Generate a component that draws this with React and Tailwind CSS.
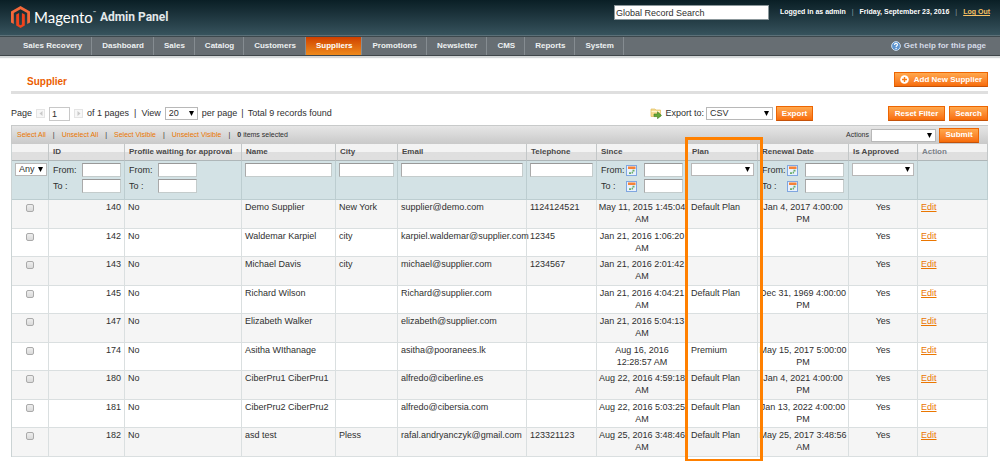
import { useState } from "react";
import { clsx } from "clsx";

const NAV = [
  "Sales Recovery",
  "Dashboard",
  "Sales",
  "Catalog",
  "Customers",
  "Suppliers",
  "Promotions",
  "Newsletter",
  "CMS",
  "Reports",
  "System",
];

// label + column width
const COLUMNS = [
  { label: "", width: "w-[37px]" },
  { label: "ID", width: "w-[76px]" },
  { label: "Profile waiting for approval", width: "w-[117px]" },
  { label: "Name", width: "w-[94px]" },
  { label: "City", width: "w-[62px]" },
  { label: "Email", width: "w-[129px]" },
  { label: "Telephone", width: "w-[70px]" },
  { label: "Since", width: "w-[91px]" },
  { label: "Plan", width: "w-[70px]" },
  { label: "Renewal Date", width: "w-[91px]" },
  { label: "Is Approved", width: "w-[69px]" },
  { label: "Action", width: "w-[70px]" },
];

const SUPPLIERS = [
  { id: 140, name: "Demo Supplier", city: "New York", email: "supplier@demo.com", phone: "1124124521", since: ["May 11, 2015 1:45:04", "AM"], plan: "Default Plan", renewal: ["Jan 4, 2017 4:00:00", "PM"] },
  { id: 142, name: "Waldemar Karpiel", city: "city", email: "karpiel.waldemar@supplier.com", phone: "12345", since: ["Jan 21, 2016 1:06:20", "AM"], plan: "", renewal: [] },
  { id: 143, name: "Michael Davis", city: "city", email: "michael@supplier.com", phone: "1234567", since: ["Jan 21, 2016 2:01:42", "AM"], plan: "", renewal: [] },
  { id: 145, name: "Richard Wilson", city: "", email: "Richard@supplier.com", phone: "", since: ["Jan 21, 2016 4:04:21", "AM"], plan: "Default Plan", renewal: ["Dec 31, 1969 4:00:00", "PM"] },
  { id: 147, name: "Elizabeth Walker", city: "", email: "elizabeth@supplier.com", phone: "", since: ["Jan 21, 2016 5:04:13", "AM"], plan: "", renewal: [] },
  { id: 174, name: "Asitha WIthanage", city: "", email: "asitha@pooranees.lk", phone: "", since: ["Aug 16, 2016", "12:28:57 AM"], plan: "Premium", renewal: ["May 15, 2017 5:00:00", "PM"] },
  { id: 180, name: "CiberPru1 CiberPru1", city: "", email: "alfredo@ciberline.es", phone: "", since: ["Aug 22, 2016 4:59:18", "AM"], plan: "Default Plan", renewal: ["Jan 4, 2021 4:00:00", "PM"] },
  { id: 181, name: "CiberPru2 CiberPru2", city: "", email: "alfredo@cibersia.com", phone: "", since: ["Aug 22, 2016 5:03:25", "AM"], plan: "Default Plan", renewal: ["Jan 13, 2022 4:00:00", "PM"] },
  { id: 182, name: "asd test", city: "Pless", email: "rafal.andryanczyk@gmail.com", phone: "123321123", since: ["Aug 25, 2016 3:48:46", "AM"], plan: "Default Plan", renewal: ["May 25, 2017 3:48:56", "AM"] },
];

function MagentoMark() {
  return (
    <svg viewBox="0 0 19 22" className="h-[22px] w-[19px]" aria-hidden="true">
      <path d="M9.5 0 19 5.500v11l-2.800 1.600V7.100L9.500 3.200 2.800 7.100v11L0 16.500v-11z" fill="#f4683a" />
      <path d="M8.100 7v11.500l1.400.8 1.400-.8V7l2.900 1.500v10.900L9.500 22l-4.300-2.600V8.500z" fill="#f0431c" />
    </svg>
  );
}

function HelpIcon() {
  return (
    <svg viewBox="0 0 10 10" className="size-[10px]" aria-hidden="true">
      <circle cx="5" cy="5" r="4.4" fill="#5d94cf" stroke="#d5e4f3" strokeWidth="0.9" />
      <path d="M3.5 3.9c0-2 3-2 3-.1 0 1-1.4 1-1.4 2.2" fill="none" stroke="#fff" strokeWidth="1.1" />
      <circle cx="5.1" cy="7.4" r="0.7" fill="#fff" />
    </svg>
  );
}

function PlusIcon() {
  return (
    <svg viewBox="0 0 9 9" className="size-[9px]" aria-hidden="true">
      <circle cx="4.5" cy="4.5" r="4.3" fill="#fff" />
      <path d="M4.5 2v5M2 4.5h5" stroke="#f77a12" strokeWidth="1.4" />
    </svg>
  );
}

function ExportIcon() {
  return (
    <svg viewBox="0 0 12 11" className="h-[11px] w-3" aria-hidden="true">
      <path d="M1 1h4l1 1h4.500v6.500H1z" fill="#f6dc8e" stroke="#dfbd62" strokeWidth="0.7" />
      <path d="M1.500 3.500h8.500" stroke="#fff5cf" strokeWidth="1.2" />
      <path d="M4 6h3.500V3.800L11.500 7.400 7.500 10.700V8.600H4z" fill="#63a83a" stroke="#3f7d22" strokeWidth="0.6" />
    </svg>
  );
}

function CalendarIcon() {
  return (
    <svg viewBox="0 0 11 11" className="size-[11px]" aria-hidden="true">
      <rect x="0.5" y="0.5" width="10" height="10" fill="#e9f1fc" stroke="#7fa6e0" />
      <rect x="2" y="1.500" width="7.500" height="2.500" fill="#f58238" />
      <path d="M6.500 4.800h2v1.800h-2zM3 7.200h2v1.800H3zM5.600 6.800h1.500v1.800H5.600z" fill="#6cae6a" />
    </svg>
  );
}

function PagerArrow({ direction }) {
  return (
    <button
      type="button"
      aria-label={direction === "prev" ? "Previous page" : "Next page"}
      className="flex size-[9px] items-center justify-center border border-[#e4e4e4] bg-[#f7f7f7]"
    >
      <svg viewBox="0 0 4 5" className="h-[5px] w-1" aria-hidden="true">
        <path d={direction === "prev" ? "M3.500 0v5L0.500 2.500z" : "M0.500 0v5L3.500 2.500z"} fill="#c9c9c9" />
      </svg>
    </button>
  );
}

function OrangeButton({ children, className }) {
  return (
    <button
      type="button"
      className={clsx(
        "flex h-[15px] items-center justify-center gap-[5px] border border-[#ed6502] border-b-[#c4520a] bg-linear-to-b from-[#ffa84c] to-[#f76c05] text-[8px] font-bold whitespace-nowrap text-white",
        className
      )}
    >
      {children}
    </button>
  );
}

function Select({ label, options = [""], className }) {
  return (
    <span className={clsx("relative flex", className)}>
      <select
        aria-label={label}
        className="h-[13px] w-full appearance-none border border-[#b8b8b8] bg-white pl-[3px] text-[9px] leading-[11px] text-[#2f2f2f]"
      >
        {options.map((o) => (
          <option key={o}>{o}</option>
        ))}
      </select>
      <svg viewBox="0 0 5 5" className="pointer-events-none absolute top-1 right-1 size-[5px]" aria-hidden="true">
        <path d="M0 0h5L2.500 5z" fill="#000" />
      </svg>
    </span>
  );
}

function TextFilter({ label, className }) {
  return (
    <input
      type="text"
      aria-label={label}
      className={clsx("block h-[14px] border border-[#c4cccc] border-t-[#999] border-l-[#aaa] bg-white px-1 text-[9px]", className)}
    />
  );
}

function RangeFilter({ name, calendar }) {
  return (
    <div className="flex flex-col gap-[2px]">
      {["From:", "To :"].map((label) => (
        <label key={label} className="flex h-[14px] items-center pl-px text-[9px] text-[#2f2f2f]">
          <span className={calendar ? "w-[25px]" : "w-[29px]"}>{label}</span>
          {calendar && (
            <button type="button" aria-label={`${name} calendar`} className="mr-[7px]">
              <CalendarIcon />
            </button>
          )}
          <TextFilter label={`${name} ${label}`} className="w-[39px]" />
        </label>
      ))}
    </div>
  );
}

function Header() {
  return (
    <header className="flex h-9 items-start justify-between border-b border-[#5b7078] bg-linear-to-b from-[#0a1f26] to-[#37535d] pr-[10px] pl-[11px]">
      <div className="flex items-center gap-1 pt-[6px] whitespace-nowrap text-white">
        <MagentoMark />
        <span className="flex items-start font-['Lato',sans-serif] text-[15px] leading-[20px]">
          Magento<span className="pt-[2px] text-[4px] leading-[8px]">™</span>
        </span>
        <span className="font-['Roboto',sans-serif] text-[12px] leading-[20px] font-bold text-[#e3e8ea]">Admin Panel</span>
      </div>
      <div className="flex items-center gap-[11px] pt-[5px] text-[7px] font-bold whitespace-nowrap text-white">
        <input
          type="text"
          aria-label="Global Record Search"
          defaultValue="Global Record Search"
          className="h-[15px] w-[155px] border border-[#8b979b] bg-white px-px text-[9px] font-normal text-[#2f2f2f]"
        />
        <span>Logged in as admin</span>
        <span className="-mx-[5px] font-normal text-[#8ba0a8]">|</span>
        <span>Friday, September 23, 2016</span>
        <span className="-mx-[5px] font-normal text-[#8ba0a8]">|</span>
        <a href="#logout" className="text-[#f8c264] underline">Log Out</a>
      </div>
    </header>
  );
}

function Navigation() {
  return (
    <nav className="flex h-5 items-stretch border-t border-b border-t-[#3c484d] border-b-[#3f464a] bg-[#676e73] pr-[14px] pl-[13px] text-[8px] font-bold text-[#eef1f2] shadow-[0_2px_1px_#d5d8d9]">
      {NAV.map((item) => (
        <a
          key={item}
          href="#nav"
          className={clsx(
            "flex items-center border-r border-[#858c91] pr-[9px] pl-[10px] whitespace-nowrap",
            item === "Suppliers" && "bg-linear-to-b from-[#cf3f00] to-[#ee8a1c] text-white"
          )}
        >
          {item}
        </a>
      ))}
      <a href="#help" className="ml-auto flex items-center gap-[3px] whitespace-nowrap text-[#d5dbe8]">
        <HelpIcon />
        Get help for this page
      </a>
    </nav>
  );
}

function Toolbar() {
  return (
    <div className="flex h-[15px] items-center justify-between text-[9px] whitespace-nowrap">
      <div className="flex items-center gap-1">
        <span>Page</span>
        <PagerArrow direction="prev" />
        <input
          type="text"
          aria-label="Page number"
          defaultValue="1"
          className="h-[14px] w-[21px] border border-[#c8c8c8] px-[2px] text-[9px]"
        />
        <PagerArrow direction="next" />
        <span>of 1 pages</span>
        <span className="px-px">|</span>
        <span>View</span>
        <Select label="Records per page" options={["20"]} className="w-[33px]" />
        <span>per page</span>
        <span>|</span>
        <span>Total 9 records found</span>
      </div>
      <div className="flex items-center">
        <div className="mr-[75px] flex items-center gap-[3px]">
          <ExportIcon />
          <label className="flex items-center gap-[2px]">
            Export to:
            <Select label="Export format" options={["CSV"]} className="w-[67px]" />
          </label>
          <OrangeButton className="w-[37px]">Export</OrangeButton>
        </div>
        <OrangeButton className="mr-1 w-[57px]">Reset Filter</OrangeButton>
        <OrangeButton className="w-[39px]">Search</OrangeButton>
      </div>
    </div>
  );
}

function MassActions() {
  const links = ["Select All", "Unselect All", "Select Visible", "Unselect Visible"];
  return (
    <div className="flex h-[19px] items-center justify-between border-t border-l border-[#c8caca] bg-linear-to-b from-[#e6e6e6] to-[#c9c9c9] pr-[9px] pl-[5px] text-[7px] whitespace-nowrap">
      <div className="flex items-center">
        {links.map((link) => (
          <span key={link} className="flex">
            <a href="#select" className="text-[#ea7601]">{link}</a>
            <span className="px-[7px]">|</span>
          </span>
        ))}
        <span><strong>0</strong> items selected</span>
      </div>
      <div className="flex items-center gap-[3px]">
        <label className="flex items-center gap-[2px]">
          Actions
          <Select label="Actions" className="w-[65px]" />
        </label>
        <OrangeButton className="w-10">Submit</OrangeButton>
      </div>
    </div>
  );
}

function DateCell({ lines }) {
  return (
    <td className="border-r border-[#dadfe0] text-center whitespace-nowrap">
      {lines.map((line) => (
        <div key={line}>{line}</div>
      ))}
    </td>
  );
}

function SupplierTable() {
  const [checked, setChecked] = useState({});
  const toggle = (id) => setChecked((c) => ({ ...c, [id]: !c[id] }));

  const filterCell = "border-r border-b border-[#bccdd0] px-[3px] pt-[2px] align-top";
  const cell = "border-r border-[#dadfe0] px-[3px] whitespace-nowrap";

  return (
    <table className="w-full table-fixed border-separate border-spacing-0 border-l border-[#cbd3d4] text-[9px] leading-[12px]">
      <colgroup>
        {COLUMNS.map((col, i) => (
          <col key={i} className={col.width} />
        ))}
      </colgroup>
      <thead>
        <tr className="h-[17px]">
          {COLUMNS.map((col, i) => (
            <th
              key={i}
              scope="col"
              className={clsx(
                "border-r border-b border-[#c3c7c8] border-b-[#aeb6b8] bg-linear-to-b from-[#f3f3f3] from-50% to-[#dfdfdf] to-50% px-1 text-left text-[8px] font-bold whitespace-nowrap",
                col.label === "Action" ? "text-[#7a8087]" : "text-[#494848]"
              )}
            >
              {col.label}
            </th>
          ))}
        </tr>
        <tr className="h-[39px] bg-[#d3e2e5]">
          <td className={filterCell}>
            <Select label="Selection" options={["Any"]} className="w-8" />
          </td>
          <td className={filterCell}><RangeFilter name="ID" /></td>
          <td className={filterCell}><RangeFilter name="Profile" /></td>
          <td className={filterCell}><TextFilter label="Name" className="w-full" /></td>
          <td className={filterCell}><TextFilter label="City" className="w-full" /></td>
          <td className={filterCell}><TextFilter label="Email" className="w-full" /></td>
          <td className={filterCell}><TextFilter label="Telephone" className="w-full" /></td>
          <td className={filterCell}><RangeFilter name="Since" calendar /></td>
          <td className={filterCell}><Select label="Plan" className="w-full" /></td>
          <td className={filterCell}><RangeFilter name="Renewal" calendar /></td>
          <td className={filterCell}><Select label="Is Approved" className="w-full" /></td>
          <td className={filterCell} />
        </tr>
      </thead>
      <tbody>
        {SUPPLIERS.map((s) => (
          <tr
            key={s.id}
            className="h-[29px] align-top odd:bg-[#f5f5f5] even:h-[28px] *:border-b *:border-b-[#dadfe0] *:pt-px"
          >
            <td className={cell}>
              <input
                type="checkbox"
                aria-label={`Select ${s.name}`}
                checked={!!checked[s.id]}
                onChange={() => toggle(s.id)}
                className="mx-auto mt-[3px] block size-2 appearance-none rounded-[2px] border border-[#aaa] bg-linear-to-b from-[#eee] to-[#dadada] checked:bg-[#ea7601]"
              />
            </td>
            <td className={clsx(cell, "text-right")}>{s.id}</td>
            <td className={cell}>No</td>
            <td className={cell}>{s.name}</td>
            <td className={cell}>{s.city}</td>
            <td className={cell}>{s.email}</td>
            <td className={cell}>{s.phone}</td>
            <DateCell lines={s.since} />
            <td className={cell}>{s.plan}</td>
            <DateCell lines={s.renewal} />
            <td className={clsx(cell, "text-center")}>Yes</td>
            <td className={cell}>
              <a href="#edit" className="text-[#ea7601] underline">Edit</a>
            </td>
          </tr>
        ))}
      </tbody>
    </table>
  );
}

export default function App() {
  return (
    <div className="bg-white font-['Liberation_Sans',Arial,sans-serif] text-[#2f2f2f]">
      <Header />
      <Navigation />
      <main className="pt-4 pr-3 pb-1 pl-[11px]">
        <div className="mb-3 flex items-start justify-between border-b-[3px] border-[#dfdfdf] pb-1">
          <h1 className="pt-1 pl-4 text-[10px] leading-[11px] font-bold text-[#eb5e00]">Supplier</h1>
          <OrangeButton className="w-[94px]">
            <PlusIcon />
            Add New Supplier
          </OrangeButton>
        </div>
        <Toolbar />
        <div className="relative mt-1">
          <MassActions />
          <SupplierTable />
          {/* highlight around the Plan column */}
          <div className="pointer-events-none absolute top-3 -bottom-[5px] left-[69%] w-[8%] border-[3px] border-[#ff8000]" />
        </div>
      </main>
    </div>
  );
}
